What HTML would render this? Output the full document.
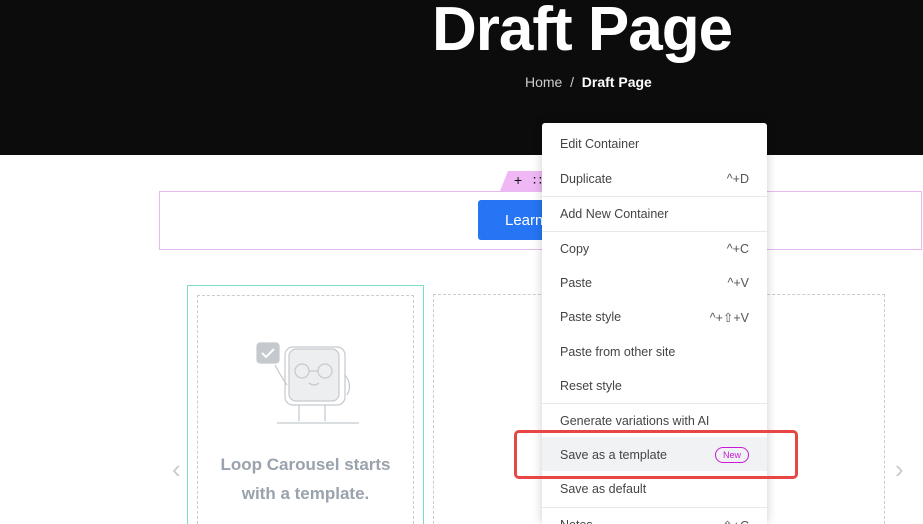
<!DOCTYPE html>
<html style="width:923px;height:524px;overflow:hidden"><head><meta charset="utf-8"><style>
*{margin:0;padding:0;box-sizing:border-box}
body{width:923px;height:524px;overflow:hidden;background:#fff;font-family:"Liberation Sans",sans-serif;position:relative}
.hdr{position:absolute;left:0;top:0;width:923px;height:155px;background:#0c0c0c}
.title{position:absolute;left:432px;top:-6px;width:306px;font-size:62px;font-weight:bold;color:#fff;white-space:nowrap;letter-spacing:-1px}
.bc{position:absolute;left:525px;top:74px;font-size:14px;color:#ccc;white-space:nowrap}
.bc b{color:#fff}
.box{position:absolute;left:159px;top:191px;width:763px;height:59px;border:1px solid #e8b8f0}
.tab{position:absolute;left:500px;top:171px;width:50px;height:20px;background:#efb8f5;clip-path:polygon(8px 0,100% 0,100% 100%,0 100%)}
.tab span{position:absolute;top:1px;font-size:14px;color:#111}
.btn{position:absolute;left:478px;top:200px;width:70px;height:40px;background:#2575f5;border-radius:3px;color:#fff;font-size:15px;padding:12px 0 0 27px}
.card{position:absolute;left:187px;top:285px;width:237px;height:239px;border:1px solid #7ddcc8;border-bottom:none}
.d1{position:absolute;left:197px;top:295px;width:217px;height:229px;border:1px dashed #ccc;border-bottom:none}
.d2{position:absolute;left:433px;top:294px;width:452px;height:230px;border:1px dashed #ccc;border-bottom:none}
.ct{position:absolute;left:197px;top:450px;width:217px;text-align:center;font-size:17px;font-weight:bold;color:#9aa2ac;line-height:29px}
.arr{position:absolute;font-size:26px;color:#ccc;top:454px}
.menu{position:absolute;left:542px;top:123px;width:225px;height:401px;background:#fff;border-radius:3px 3px 0 0;box-shadow:0 0 10px rgba(0,0,0,.2);overflow:hidden}
.it{position:absolute;left:0;width:225px;height:34px;font-size:12.5px;color:#444;padding:11px 18px 0 18px}
.it i{font-style:normal;position:absolute;right:18px;top:11px;color:#555}
.sep{position:absolute;left:0;width:225px;height:1px;background:#e6e8ea}
.new{position:absolute;right:18px;top:10px;border:1px solid #c81ad8;color:#c81ad8;border-radius:9px;font-size:9px;padding:2px 7px}
.red{position:absolute;left:514px;top:430px;width:284px;height:49px;border:3px solid #e84545;border-radius:5px}
</style></head><body>
<div class="hdr"></div>
<div class="title">Draft Page</div>
<div class="bc">Home &nbsp;/&nbsp; <b>Draft Page</b></div>
<div class="box"></div>
<div class="tab"><span style="left:14px">+</span><span style="left:33px">∷</span></div>
<div class="btn">Learn</div>
<div class="card"></div>
<div class="d1"></div>
<div class="d2"></div>
<svg style="position:absolute;left:247px;top:335px" width="112" height="92" viewBox="0 0 112 92" fill="none" stroke="#c5c9ce" stroke-width="1.2">
<rect x="10" y="8" width="22" height="20" rx="3" fill="#c5c9ce"/><path d="M15 18l4 4 8-8" stroke="#fff" stroke-width="2"/>
<rect x="38" y="12" width="60" height="58" rx="8"/><rect x="42" y="14" width="50" height="52" rx="7" fill="#eceef0"/>
<circle cx="55" cy="36" r="7"/><circle cx="78" cy="36" r="7"/><path d="M62 36h9M72 48q-5 4-10 0M52 70v16M78 70v16M28 30q5 10 12 20M98 40q8 10 2 20M30 88h82"/>
</svg>
<div class="ct">Loop Carousel starts<br>with a template.</div>
<div class="arr" style="left:172px">‹</div>
<div class="arr" style="left:895px">›</div>
<div class="menu">
<div class="it" style="top:3px">Edit Container</div>
<div class="it" style="top:38px">Duplicate<i>^+D</i></div>
<div class="sep" style="top:73px"></div>
<div class="it" style="top:73px">Add New Container</div>
<div class="sep" style="top:108px"></div>
<div class="it" style="top:108px">Copy<i>^+C</i></div>
<div class="it" style="top:142px">Paste<i>^+V</i></div>
<div class="it" style="top:176px">Paste style<i>^+⇧+V</i></div>
<div class="it" style="top:211px">Paste from other site</div>
<div class="it" style="top:245px">Reset style</div>
<div class="sep" style="top:280px"></div>
<div class="it" style="top:280px">Generate variations with AI</div>
<div class="it" style="top:314px;background:#f1f2f3">Save as a template<span class="new">New</span></div>
<div class="it" style="top:348px">Save as default</div>
<div class="sep" style="top:384px"></div>
<div class="it" style="top:384px">Notes<i>⇧+C</i></div>
</div>
<div class="red"></div>
</body></html>
